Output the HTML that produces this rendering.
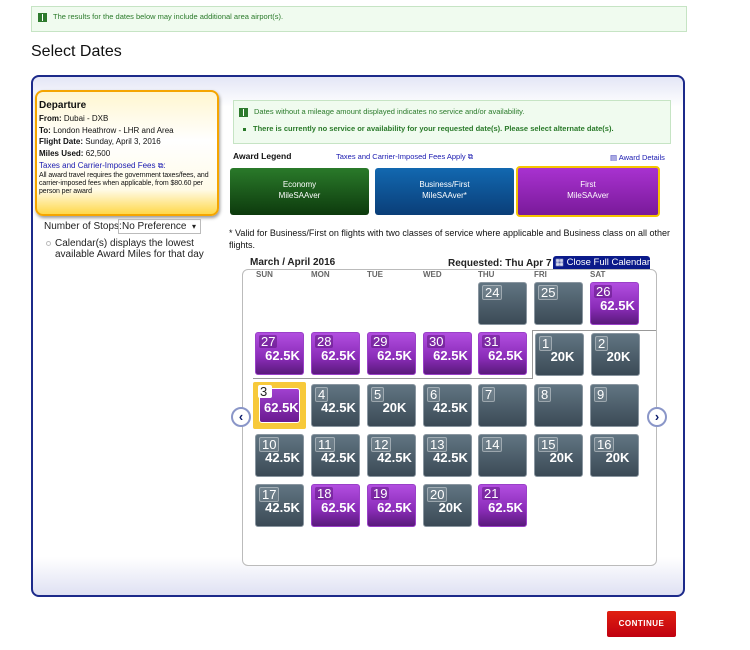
<!DOCTYPE html>
<html><head><meta charset="utf-8"><style>
*{box-sizing:border-box;margin:0;padding:0}
body{width:750px;height:650px;background:#fff;font-family:"Liberation Sans",Arial,sans-serif;position:relative;overflow:hidden}
.a{position:absolute}
.info{color:#2a7a2a}
.ic{display:inline-block;width:9px;height:9px;background:#2e7a2e;vertical-align:middle;margin-right:6px;position:relative}
.ic:after{content:"";position:absolute;left:4px;top:1px;width:1px;height:7px;background:#fff}
.t{position:absolute;width:49px;height:43px;border-radius:3px;color:#fff;font-weight:bold;font-size:13px;text-align:center}
.g{background:linear-gradient(#617582,#3b4a56);border:1px solid #8a96a0}
.p{background:linear-gradient(#b24ee0,#8a2cb8 60%,#5a1a7c);border:1px solid #9a40c8}
.t .n{position:absolute;left:3px;top:2px;font-weight:normal;font-size:13px;line-height:13px;padding:0 2px;background:rgba(255,255,255,.12);border:1px solid rgba(255,255,255,.35);border-radius:2px}
.p .n{border:none;background:rgba(80,10,110,.45)}
.t .v{position:absolute;left:6px;right:0;top:15px;font-size:13px}
.dh{position:absolute;top:270px;font-size:8px;color:#666;font-weight:bold}
</style></head><body>

<div class="a" style="left:31px;top:6px;width:656px;height:26px;background:#f0fbef;border:1px solid #c6e4c4"></div>
<div class="a info" style="left:38px;top:12px;font-size:7.5px"><span class="ic"></span>The results for the dates below may include additional area airport(s).</div>

<div class="a" style="left:31px;top:43px;font-size:16px;color:#111">Select Dates</div>

<div class="a" style="left:31px;top:75px;width:654px;height:522px;border:2px solid #1c2a8a;border-radius:8px;background:linear-gradient(#e4e6f6,#fff 30px,#fff 480px,#dfe1f3)"></div>

<!-- departure box -->
<div class="a" style="left:35px;top:90px;width:184px;height:126px;border:2px solid #f5a500;border-radius:8px;background:linear-gradient(#fff6d0,#fff 40%,#fffbe8 80%,#ffd84a);box-shadow:1px 2px 3px #999"></div>
<div class="a" style="left:39px;top:100px;width:176px;font-size:9.5px;line-height:11.8px;color:#111">
<div style="font-weight:bold;font-size:10px;margin-bottom:1px">Departure</div>
<div style="font-size:8px"><b>From:</b> Dubai - DXB</div>
<div style="font-size:8px"><b>To:</b> London Heathrow - LHR and Area</div>
<div style="font-size:8px"><b>Flight Date:</b> Sunday, April 3, 2016</div>
<div style="font-size:8px"><b>Miles Used:</b> 62,500</div>
<div style="font-size:8px;color:#1a1ab0">Taxes and Carrier-Imposed Fees ⧉:</div>
<div style="font-size:7px;line-height:8px;letter-spacing:-0.1px">All award travel requires the government taxes/fees, and carrier-imposed fees when applicable, from $80.60 per person per award</div>
</div>
<div class="a" style="left:44px;top:221px;font-size:10px;color:#222">Number of Stops:</div>
<div class="a" style="left:118px;top:219px;width:83px;height:15px;border:1px solid #bbb;font-size:10px;padding:1px 3px;color:#222;white-space:nowrap">No Preference<span style="position:absolute;right:4px;top:2px;font-size:8px">▾</span></div>
<div class="a" style="left:46px;top:241px;width:5px;height:5px;border-radius:50%;border:1px solid #bbb"></div>
<div class="a" style="left:55px;top:238px;font-size:10px;line-height:11px;color:#222">Calendar(s) displays the lowest<br>available Award Miles for that day</div>

<!-- right info -->
<div class="a" style="left:233px;top:100px;width:438px;height:44px;background:#f0fbef;border:1px solid #c6e4c4"></div>
<div class="a info" style="left:239px;top:107px;font-size:7.5px"><span class="ic"></span>Dates without a mileage amount displayed indicates no service and/or availability.</div>
<div class="a info" style="left:243px;top:124px;font-size:7.5px;font-weight:bold"><span style="display:inline-block;width:3px;height:3px;background:#2a7a2a;vertical-align:middle;margin-right:7px"></span>There is currently no service or availability for your requested date(s). Please select alternate date(s).</div>

<div class="a" style="left:233px;top:151px;font-size:8.5px;font-weight:bold;color:#111">Award Legend</div>
<div class="a" style="left:336px;top:152px;font-size:7.5px;color:#1a1ab0">Taxes and Carrier-Imposed Fees Apply ⧉</div>
<div class="a" style="left:610px;top:153px;font-size:7.5px;color:#1a1ab0">▤ Award Details</div>

<div class="a" style="left:230px;top:168px;width:139px;height:47px;border-radius:3px;background:linear-gradient(#2a7a2a,#0d3a0d);color:#fff;font-size:8px;text-align:center;padding-top:11px;line-height:11px">Economy<br>MileSAAver</div>
<div class="a" style="left:375px;top:168px;width:139px;height:47px;border-radius:3px;background:linear-gradient(#1268b0,#0a3e78);color:#fff;font-size:8px;text-align:center;padding-top:11px;line-height:11px">Business/First<br>MileSAAver*</div>
<div class="a" style="left:516px;top:166px;width:144px;height:51px;border-radius:4px;border:2px solid #f5c400;background:linear-gradient(#a832d0,#7a1a9a);color:#fff;font-size:8px;text-align:center;padding-top:11px;line-height:11px">First<br>MileSAAver</div>

<div class="a" style="left:229px;top:227px;width:448px;font-size:9px;line-height:12px;color:#111">* Valid for Business/First on flights with two classes of service where applicable and Business class on all other flights.</div>

<div class="a" style="left:250px;top:257px;font-size:10px;font-weight:bold;color:#222">March / April 2016</div>
<div class="a" style="left:448px;top:258px;font-size:10px;font-weight:bold;color:#222">Requested: Thu Apr 7</div>
<div class="a" style="left:553px;top:256px;width:97px;height:13px;background:#0a1a8a;color:#fff;font-size:9.5px;border-radius:3px 3px 0 0;padding-left:2px;line-height:13px;white-space:nowrap;overflow:hidden">▦ Close Full Calendar</div>

<div class="a" style="left:242px;top:269px;width:415px;height:297px;border:1px solid #bbb;border-radius:6px;background:#fff"></div>
<div class="dh" style="left:256px">SUN</div><div class="dh" style="left:311px">MON</div><div class="dh" style="left:367px">TUE</div><div class="dh" style="left:423px">WED</div><div class="dh" style="left:478px">THU</div><div class="dh" style="left:534px">FRI</div><div class="dh" style="left:590px">SAT</div>

<div class="a" style="left:532px;top:330px;width:124px;height:1px;background:#999"></div>
<div class="a" style="left:532px;top:330px;width:1px;height:49px;background:#999"></div>
<div class="a" style="left:253px;top:378px;width:280px;height:1px;background:#999"></div>

<div class="t g" style="left:478px;top:282px"><span class="n">24</span></div>
<div class="t g" style="left:534px;top:282px"><span class="n">25</span></div>
<div class="t p" style="left:590px;top:282px"><span class="n">26</span><span class="v">62.5K</span></div>

<div class="t p" style="left:255px;top:332px"><span class="n">27</span><span class="v">62.5K</span></div>
<div class="t p" style="left:311px;top:332px"><span class="n">28</span><span class="v">62.5K</span></div>
<div class="t p" style="left:367px;top:332px"><span class="n">29</span><span class="v">62.5K</span></div>
<div class="t p" style="left:423px;top:332px"><span class="n">30</span><span class="v">62.5K</span></div>
<div class="t p" style="left:478px;top:332px"><span class="n">31</span><span class="v">62.5K</span></div>
<div class="t g" style="left:535px;top:333px"><span class="n">1</span><span class="v">20K</span></div>
<div class="t g" style="left:591px;top:333px"><span class="n">2</span><span class="v">20K</span></div>

<div class="a" style="left:253px;top:382px;width:53px;height:47px;background:#f7c93a;border-radius:2px"></div>
<div class="a" style="left:259px;top:388px;width:41px;height:35px;border:1px solid #fff;border-radius:3px;background:linear-gradient(#a040d0,#6a1a90)"></div>
<div class="a" style="left:258px;top:385px;width:14px;height:13px;background:#fff;font-size:13px;line-height:13px;padding-left:2px;color:#222;border-radius:2px">3</div>
<div class="a" style="left:264px;top:400px;font-size:13px;font-weight:bold;color:#fff">62.5K</div>
<div class="t g" style="left:311px;top:384px"><span class="n">4</span><span class="v">42.5K</span></div>
<div class="t g" style="left:367px;top:384px"><span class="n">5</span><span class="v">20K</span></div>
<div class="t g" style="left:423px;top:384px"><span class="n">6</span><span class="v">42.5K</span></div>
<div class="t g" style="left:478px;top:384px"><span class="n">7</span></div>
<div class="t g" style="left:534px;top:384px"><span class="n">8</span></div>
<div class="t g" style="left:590px;top:384px"><span class="n">9</span></div>

<div class="t g" style="left:255px;top:434px"><span class="n">10</span><span class="v">42.5K</span></div>
<div class="t g" style="left:311px;top:434px"><span class="n">11</span><span class="v">42.5K</span></div>
<div class="t g" style="left:367px;top:434px"><span class="n">12</span><span class="v">42.5K</span></div>
<div class="t g" style="left:423px;top:434px"><span class="n">13</span><span class="v">42.5K</span></div>
<div class="t g" style="left:478px;top:434px"><span class="n">14</span></div>
<div class="t g" style="left:534px;top:434px"><span class="n">15</span><span class="v">20K</span></div>
<div class="t g" style="left:590px;top:434px"><span class="n">16</span><span class="v">20K</span></div>

<div class="t g" style="left:255px;top:484px"><span class="n">17</span><span class="v">42.5K</span></div>
<div class="t p" style="left:311px;top:484px"><span class="n">18</span><span class="v">62.5K</span></div>
<div class="t p" style="left:367px;top:484px"><span class="n">19</span><span class="v">62.5K</span></div>
<div class="t g" style="left:423px;top:484px"><span class="n">20</span><span class="v">20K</span></div>
<div class="t p" style="left:478px;top:484px"><span class="n">21</span><span class="v">62.5K</span></div>

<div class="a" style="left:231px;top:407px;width:20px;height:20px;border-radius:50%;background:#fff;border:2px solid #8a96c8;color:#0a1a6a;font-weight:bold;font-size:13px;text-align:center;line-height:16px">‹</div>
<div class="a" style="left:647px;top:407px;width:20px;height:20px;border-radius:50%;background:#fff;border:2px solid #8a96c8;color:#0a1a6a;font-weight:bold;font-size:13px;text-align:center;line-height:16px">›</div>

<div class="a" style="left:607px;top:611px;width:69px;height:26px;background:linear-gradient(#e02010,#c00010);color:#fff;font-size:8px;font-weight:bold;text-align:center;line-height:26px;letter-spacing:.5px;border-radius:2px">CONTINUE</div>
</body></html>
